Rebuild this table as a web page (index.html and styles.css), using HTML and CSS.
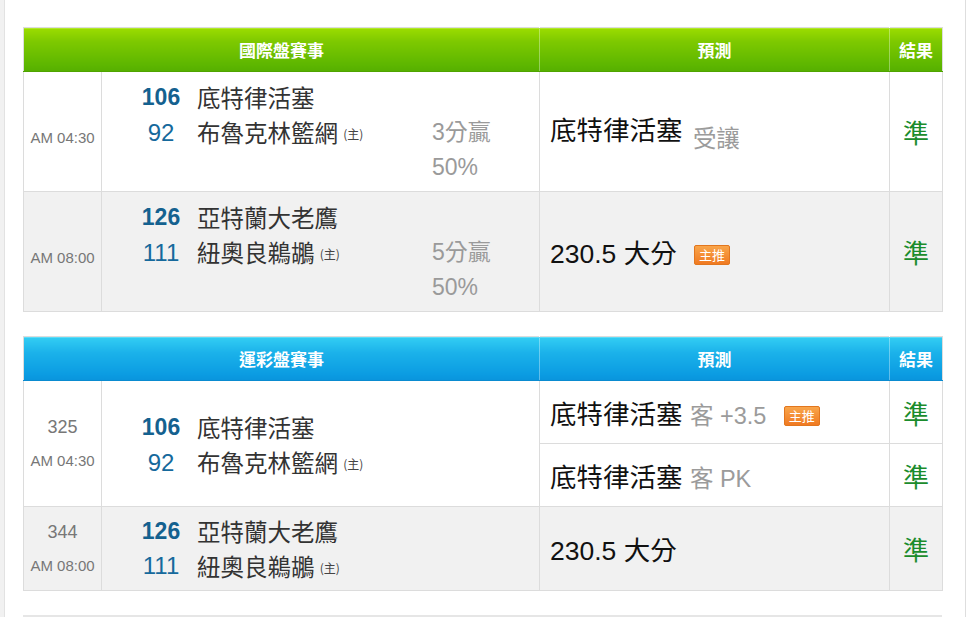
FILE: index.html
```html
<!DOCTYPE html>
<html lang="zh-Hant">
<head>
<meta charset="utf-8">
<title>賽事預測</title>
<link rel="stylesheet" href="styles.css">
</head>
<body>
<div class="page">
  <table class="board green">
    <colgroup><col class="c-time"><col class="c-match"><col class="c-pick"><col class="c-res"></colgroup>
    <thead>
      <tr><th colspan="2">國際盤賽事</th><th>預測</th><th>結果</th></tr>
    </thead>
    <tbody>
      <tr class="tall">
        <td class="time"><span class="shift">AM 04:30</span></td>
        <td class="match">
          <div class="teams three">
            <span class="num b">106</span><span class="name">底特律活塞</span><span></span>
            <span class="num">92</span><span class="name">布魯克林籃網 <small class="home">(主)</small></span><span class="spread">3分贏</span>
            <span></span><span></span><span class="spread">50%</span>
          </div>
        </td>
        <td class="pick">底特律活塞 <span class="sub low">受讓</span></td>
        <td class="res">準</td>
      </tr>
      <tr class="tall alt">
        <td class="time"><span class="shift">AM 08:00</span></td>
        <td class="match">
          <div class="teams three">
            <span class="num b">126</span><span class="name">亞特蘭大老鷹</span><span></span>
            <span class="num">111</span><span class="name">紐奧良鵜鶘 <small class="home">(主)</small></span><span class="spread">5分贏</span>
            <span></span><span></span><span class="spread">50%</span>
          </div>
        </td>
        <td class="pick">230.5 大分 <span class="badge">主推</span></td>
        <td class="res">準</td>
      </tr>
    </tbody>
  </table>

  <table class="board blue">
    <colgroup><col class="c-time"><col class="c-match"><col class="c-pick"><col class="c-res"></colgroup>
    <thead>
      <tr><th colspan="2">運彩盤賽事</th><th>預測</th><th>結果</th></tr>
    </thead>
    <tbody>
      <tr class="half">
        <td class="time two" rowspan="2"><span class="code">325</span><span>AM 04:30</span></td>
        <td class="match" rowspan="2">
          <div class="teams lower">
            <span class="num b">106</span><span class="name">底特律活塞</span><span></span>
            <span class="num">92</span><span class="name">布魯克林籃網 <small class="home">(主)</small></span><span></span>
          </div>
        </td>
        <td class="pick">底特律活塞 <span class="sub">客 +3.5</span> <span class="badge">主推</span></td>
        <td class="res">準</td>
      </tr>
      <tr class="half">
        <td class="pick">底特律活塞 <span class="sub">客 PK</span></td>
        <td class="res">準</td>
      </tr>
      <tr class="mid alt">
        <td class="time two"><span class="code">344</span><span>AM 08:00</span></td>
        <td class="match">
          <div class="teams">
            <span class="num b">126</span><span class="name">亞特蘭大老鷹</span><span></span>
            <span class="num">111</span><span class="name">紐奧良鵜鶘 <small class="home">(主)</small></span><span></span>
          </div>
        </td>
        <td class="pick">230.5 大分</td>
        <td class="res">準</td>
      </tr>
    </tbody>
  </table>

  <div class="next"></div>
</div>
</body>
</html>
```

FILE: styles.css
```css
html, body {
  margin: 0;
  padding: 0;
  background: #ffffff;
}

body {
  font-family: "Liberation Sans", "Noto Sans CJK TC", sans-serif;
  color: #333;
}

.page {
  width: 966px;
  height: 617px;
  overflow: hidden;
  box-sizing: border-box;
  border-left: 4px solid #f1f1f1;
  border-right: 1px solid #dedede;
  box-shadow: inset 1px 0 0 #e2e2e2;
  padding: 27px 0 0 19px;
}

.board {
  width: 919px;
  border-collapse: collapse;
  table-layout: fixed;
  margin-bottom: 24px;
  border: 1px solid #dcdcdc;
}

.c-time { width: 78px; }
.c-match { width: 438px; }
.c-pick { width: 350px; }
.c-res { width: 53px; }

.board th {
  height: 43px;
  padding: 0;
  color: #fff;
  font-size: 17px;
  font-weight: bold;
  text-align: center;
  font-family: "Noto Sans CJK TC", sans-serif;
  border-left: 1px solid rgba(255, 255, 255, 0.35);
}

.board th:first-child { border-left: none; }

.green th {
  background: linear-gradient(#9bdc00 0%, #7ec900 30%, #5db600 85%, #56af00 100%);
  border-bottom: 1px solid #4fa400;
  box-shadow: inset 0 1px 0 #b2e82a;
}

.blue th {
  background: linear-gradient(#33cdf3 0%, #1bb2ea 35%, #0b9ce2 85%, #0994dc 100%);
  border-bottom: 1px solid #0a8bd0;
  box-shadow: inset 0 1px 0 #5cdcf8;
}

.board td {
  border: 1px solid #dcdcdc;
  padding: 0;
  vertical-align: middle;
}

.alt td { background: #f1f1f1; }

.tall td { height: 118px; }
.half td { height: 62px; }
.mid td { height: 83px; }

.time {
  text-align: center;
  font-size: 15px;
  color: #777;
}

.time .shift {
  display: block;
  margin-top: 12px;
}

.time.two span {
  display: block;
  line-height: 34px;
}

.time .code {
  font-size: 18px;
  color: #777;
}

.teams {
  display: grid;
  grid-template-columns: 60px 240px 1fr;
  grid-auto-rows: 35px;
  align-items: center;
  padding-left: 30px;
}

.teams.three { padding: 8px 0 6px 30px; }
.teams.lower { padding-top: 3px; }

.num {
  text-align: center;
  font-size: 24px;
  color: #16699c;
  padding-right: 2px;
}

.num.b { font-weight: bold; font-size: 23px; color: #14618f; }

.name {
  padding-left: 5px;
  font-size: 23.5px;
  color: #333;
  font-family: "Noto Sans CJK TC", sans-serif;
  line-height: 35px;
  white-space: nowrap;
}

.home {
  font-size: 12px;
  line-height: 12px;
  color: #444;
  vertical-align: 3px;
}

.spread {
  font-size: 23px;
  color: #9a9a9a;
  line-height: 35px;
}

.pick {
  padding-left: 10px !important;
  font-size: 26.5px;
  color: #111;
  white-space: nowrap;
}

.sub {
  font-size: 23.5px;
  color: #9b9b9b;
}

.sub.low {
  vertical-align: -7px;
  margin-left: 3px;
}

.badge {
  display: inline-block;
  width: 34px;
  height: 18px;
  line-height: 18px;
  margin-left: 10px;
  border: 1px solid #e2761e;
  border-radius: 2px;
  background: linear-gradient(#f9a54a, #f07a22);
  color: #fff;
  font-size: 13px;
  text-align: center;
  vertical-align: 3px;
  font-family: "Noto Sans CJK TC", sans-serif;
}

.res {
  text-align: center;
  font-size: 26px;
  color: #1b8c2c;
  font-family: "Noto Sans CJK TC", sans-serif;
}

.next {
  width: 919px;
  height: 6px;
  border-top: 2px solid #e6e6e6;
  background: #fafafa;
}
```
